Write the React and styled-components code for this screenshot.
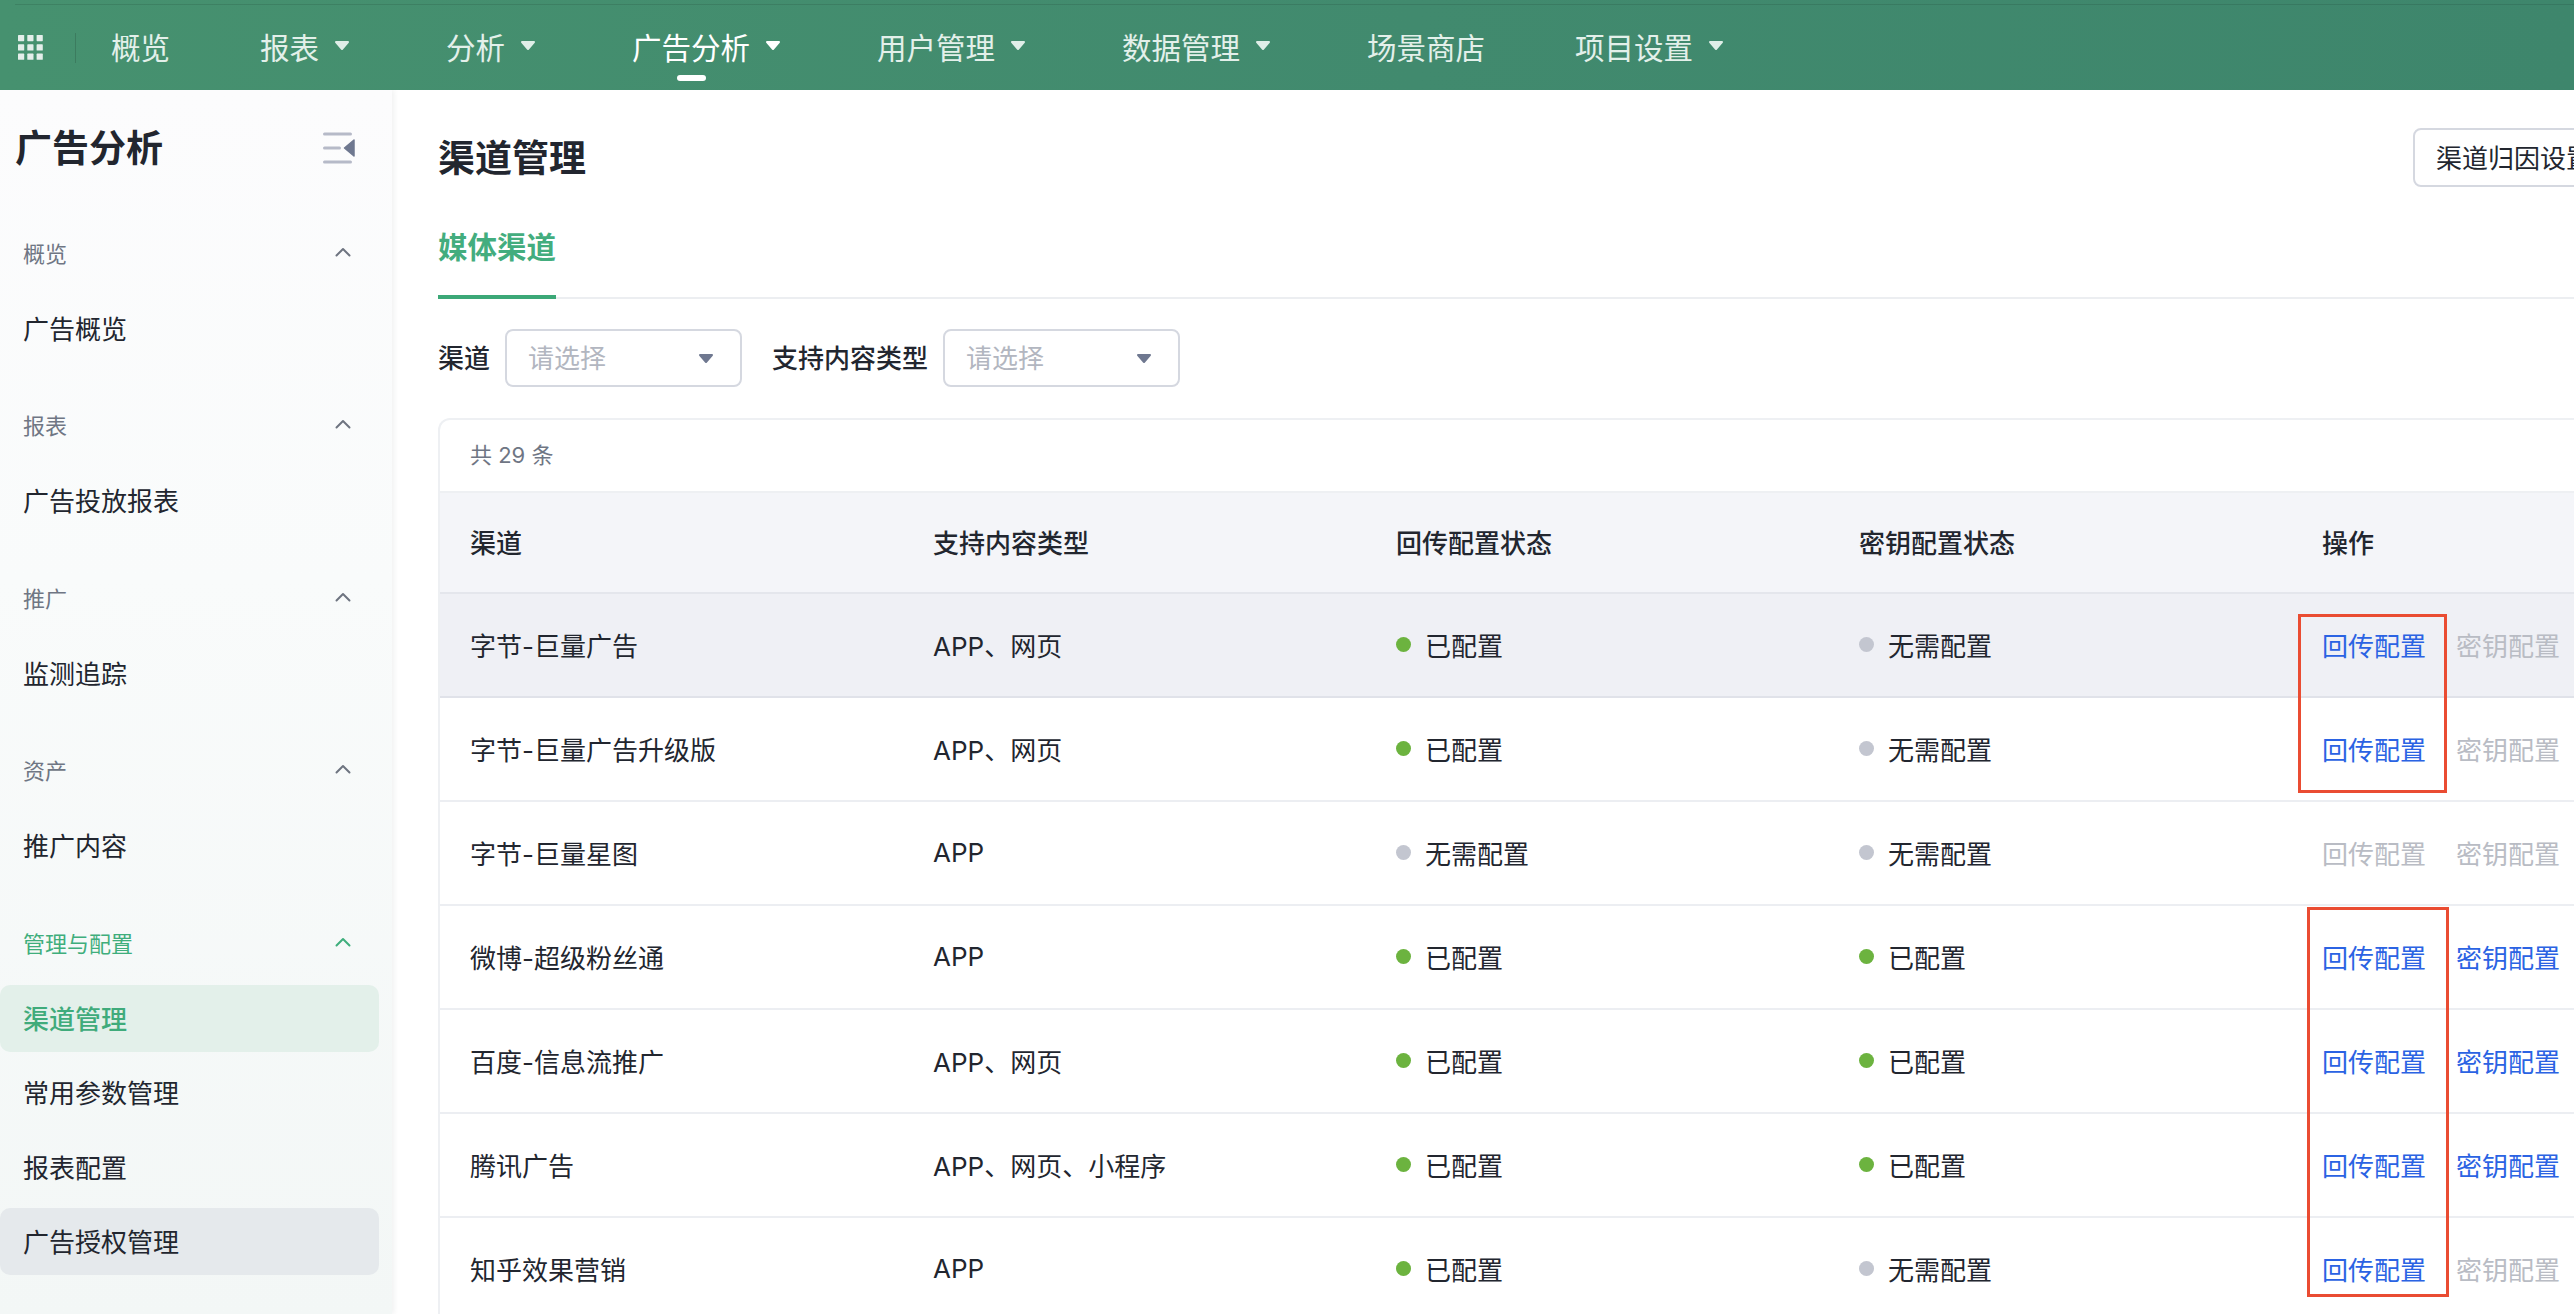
import React from "react";
import styled, { createGlobalStyle } from "styled-components";

const NAV_ITEMS = [
  { label: "概览" },
  { label: "报表", menu: true },
  { label: "分析", menu: true },
  { label: "广告分析", menu: true, active: true },
  { label: "用户管理", menu: true },
  { label: "数据管理", menu: true },
  { label: "场景商店" },
  { label: "项目设置", menu: true },
];

const SIDE_GROUPS = [
  { title: "概览", items: ["广告概览"] },
  { title: "报表", items: ["广告投放报表"] },
  { title: "推广", items: ["监测追踪"] },
  { title: "资产", items: ["推广内容"] },
  { title: "管理与配置", active: true, items: ["渠道管理", "常用参数管理", "报表配置", "广告授权管理"] },
];

const CHANNELS = [
  { name: "字节-巨量广告", types: "APP、网页", back: true, key: false, backLink: true, keyLink: false, hover: true },
  { name: "字节-巨量广告升级版", types: "APP、网页", back: true, key: false, backLink: true, keyLink: false },
  { name: "字节-巨量星图", types: "APP", back: false, key: false, backLink: false, keyLink: false },
  { name: "微博-超级粉丝通", types: "APP", back: true, key: true, backLink: true, keyLink: true },
  { name: "百度-信息流推广", types: "APP、网页", back: true, key: true, backLink: true, keyLink: true },
  { name: "腾讯广告", types: "APP、网页、小程序", back: true, key: true, backLink: true, keyLink: true },
  { name: "知乎效果营销", types: "APP", back: true, key: false, backLink: true, keyLink: false },
];

const Caret = ({ color }) => (
  <svg width="16" height="11" viewBox="0 0 16 11">
    <path d="M2 2h12L8 9z" fill={color} stroke={color} strokeWidth="2" strokeLinejoin="round" />
  </svg>
);

const GridIcon = () => (
  <svg width="26" height="26" viewBox="0 0 26 26" fill="#e4eeea">
    {[0, 9.3, 18.6].map((y) =>
      [0, 9.3, 18.6].map((x) => <rect key={`${x}-${y}`} x={x} y={y} width="6.2" height="6.2" rx="0.6" />)
    )}
  </svg>
);

const CollapseIcon = () => (
  <svg width="32" height="32" viewBox="0 0 32 32">
    <g stroke="#b6bac8" strokeWidth="3" strokeLinecap="round">
      <path d="M1.5 2h26" />
      <path d="M1.5 16h15" />
      <path d="M1.5 30h26" />
    </g>
    <path d="M31 8v16L21.5 16z" fill="#6f7890" stroke="#6f7890" strokeWidth="1.5" strokeLinejoin="round" />
  </svg>
);

const Chevron = ({ color }) => (
  <svg width="16" height="10" viewBox="0 0 16 10" fill="none">
    <path d="M1.5 8.5L8 2l6.5 6.5" stroke={color} strokeWidth="2" strokeLinecap="round" strokeLinejoin="round" />
  </svg>
);

export default function App() {
  return (
    <Page>
      <GlobalStyle />
      <TopBar>
        <GridIcon />
        <TopDivider />
        <NavList>
          {NAV_ITEMS.map((item) => (
            <NavItem key={item.label} $active={item.active}>
              <NavLabel $active={item.active}>{item.label}</NavLabel>
              {item.menu && (
                <NavCaret>
                  <Caret color={item.active ? "#ffffff" : "#dfeee8"} />
                </NavCaret>
              )}
            </NavItem>
          ))}
        </NavList>
      </TopBar>

      <Body>
        <Sidebar>
          <SideTitleRow>
            <SideTitle>广告分析</SideTitle>
            <CollapseIcon />
          </SideTitleRow>
          {SIDE_GROUPS.map((group) => (
            <SideGroup key={group.title}>
              <GroupHead $active={group.active}>
                <span>{group.title}</span>
                <Chevron color={group.active ? "#3fae7c" : "#6e7480"} />
              </GroupHead>
              <SideItems>
                {group.items.map((item) => (
                  <SideItem key={item} $current={item === "渠道管理"} $hover={item === "广告授权管理"}>
                    {item}
                  </SideItem>
                ))}
              </SideItems>
            </SideGroup>
          ))}
        </Sidebar>

        <Main>
          <Content>
            <TitleRow>
              <PageTitle>渠道管理</PageTitle>
              <OutlineButton>渠道归因设置</OutlineButton>
            </TitleRow>

            <Tabs>
              <Tab>媒体渠道</Tab>
            </Tabs>

            <Filters>
              <FilterLabel>渠道</FilterLabel>
              <SelectBox>
                <span>请选择</span>
                <Caret color="#6f7890" />
              </SelectBox>
              <FilterLabel>支持内容类型</FilterLabel>
              <SelectBox>
                <span>请选择</span>
                <Caret color="#6f7890" />
              </SelectBox>
            </Filters>

            <Card>
              <CountRow>共 29 条</CountRow>
              <HeadRow>
                <div>渠道</div>
                <div>支持内容类型</div>
                <div>回传配置状态</div>
                <div>密钥配置状态</div>
                <div>操作</div>
              </HeadRow>
              {CHANNELS.map((row) => (
                <Row key={row.name} $hover={row.hover}>
                  <div>{row.name}</div>
                  <div>{row.types}</div>
                  <Status>
                    <Dot $on={row.back} />
                    {row.back ? "已配置" : "无需配置"}
                  </Status>
                  <Status>
                    <Dot $on={row.key} />
                    {row.key ? "已配置" : "无需配置"}
                  </Status>
                  <Actions>
                    <ActionLink $on={row.backLink}>回传配置</ActionLink>
                    <ActionLink $on={row.keyLink}>密钥配置</ActionLink>
                  </Actions>
                </Row>
              ))}
            </Card>
          </Content>
        </Main>
      </Body>

      <Callout $x={2298} $y={614} $w={149} $h={179} />
      <Callout $x={2307} $y={907} $w={142} $h={390} />
    </Page>
  );
}

const GlobalStyle = createGlobalStyle`
  html, body {
    margin: 0;
    padding: 0;
    background: #ffffff;
    overflow: hidden;
  }
  * {
    box-sizing: border-box;
  }
`;

const Page = styled.div`
  position: relative;
  width: 2574px;
  height: 1314px;
  overflow: hidden;
  font-family: Inter, "Noto Sans CJK SC", sans-serif;
  font-size: 26px;
  color: #22262f;
`;

const TopBar = styled.header`
  position: relative;
  z-index: 2;
  display: flex;
  align-items: center;
  height: 90px;
  padding: 6px 0 0 18px;
  background: linear-gradient(90deg, #46916f 0%, #418a6e 55%, #3e866c 100%);

  &::before {
    content: "";
    position: absolute;
    top: 4px;
    left: 15px;
    right: 0;
    height: 1px;
    background: rgba(0, 0, 0, 0.1);
  }
`;

const TopDivider = styled.span`
  width: 1px;
  height: 30px;
  margin-left: 31px;
  background: rgba(0, 0, 0, 0.14);
`;

const NavList = styled.nav`
  display: flex;
  align-items: center;
  gap: 90px;
  margin-left: 35px;
`;

const NavItem = styled.div`
  display: flex;
  align-items: center;
  color: ${(p) => (p.$active ? "#ffffff" : "#e3f0ea")};
`;

const NavLabel = styled.span`
  position: relative;
  font-size: 29.5px;
  line-height: 40px;

  ${(p) =>
    p.$active &&
    `
    &::after {
      content: "";
      position: absolute;
      left: 50%;
      bottom: -13px;
      width: 29px;
      height: 6px;
      margin-left: -14.5px;
      border-radius: 3px;
      background: #ffffff;
    }
  `}
`;

const NavCaret = styled.span`
  display: flex;
  margin: -6px 6px 0 15px;
`;

const Body = styled.div`
  display: flex;
  height: 1224px;
`;

const Sidebar = styled.aside`
  position: relative;
  z-index: 1;
  flex: 0 0 392px;
  padding-top: 28px;
  background: linear-gradient(180deg, #fcfcfd 0%, #f9fbfb 40%, #f3f7f6 100%);
  box-shadow: 2px 0 5px rgba(40, 50, 60, 0.07);
`;

const SideTitleRow = styled.div`
  display: flex;
  align-items: center;
  justify-content: space-between;
  height: 60px;
  margin-bottom: 50px;
  padding: 0 37px 0 15px;
`;

const SideTitle = styled.h2`
  margin: 2px 0 0;
  font-size: 37px;
  line-height: 60px;
  font-weight: 700;
  color: #22262f;
`;

const SideGroup = styled.section`
  margin-bottom: 38.4px;
`;

const GroupHead = styled.div`
  display: flex;
  align-items: center;
  justify-content: space-between;
  height: 50px;
  margin-bottom: 17px;
  padding: 0 41px 0 23px;
  font-size: 22px;
  color: ${(p) => (p.$active ? "#3fae7c" : "#6f7684")};

  span {
    margin-bottom: 2px;
  }

  svg {
    margin-top: -2px;
  }
`;

const SideItems = styled.div`
  display: flex;
  flex-direction: column;
  gap: 7.5px;
`;

const SideItem = styled.div`
  display: flex;
  align-items: center;
  width: 379px;
  height: 67px;
  padding: 0 0 2px 23px;
  border-radius: 10px;
  color: ${(p) => (p.$current ? "#3fab7b" : "#22262f")};
  font-weight: ${(p) => (p.$current ? 500 : 400)};
  background: ${(p) => (p.$current ? "#e3f0ea" : p.$hover ? "#e5e9ec" : "transparent")};
`;

const Main = styled.main`
  flex: 1;
  min-width: 0;
  overflow: hidden;
  padding: 38px 0 0 46px;
`;

const Content = styled.div`
  width: 2177px;
`;

const TitleRow = styled.div`
  display: flex;
  align-items: center;
  justify-content: space-between;
  height: 59px;
`;

const PageTitle = styled.h1`
  margin: 0 0 3px;
  font-size: 37px;
  font-weight: 700;
  color: #22262f;
`;

const OutlineButton = styled.button`
  width: 202px;
  height: 59px;
  padding: 0 0 3px 21px;
  border: 2px solid #d5d8e0;
  border-radius: 8px;
  background: #ffffff;
  font: inherit;
  color: #22262f;
  text-align: left;
  white-space: nowrap;
`;

const Tabs = styled.div`
  display: flex;
  margin-top: 39px;
  border-bottom: 2px solid #eceef1;
`;

const Tab = styled.div`
  margin-bottom: -2px;
  padding-bottom: 27px;
  border-bottom: 4px solid #3ca877;
  font-size: 29.5px;
  line-height: 42px;
  font-weight: 600;
  color: #43ad7e;
`;

const Filters = styled.div`
  display: flex;
  align-items: center;
  margin-top: 30px;
`;

const FilterLabel = styled.label`
  margin: 0 15px 3px 0;
  font-weight: 500;
  color: #22262f;
`;

const SelectBox = styled.div`
  display: flex;
  align-items: center;
  justify-content: space-between;
  width: 237px;
  height: 58px;
  margin-right: 30px;
  padding: 0 26px 0 21px;
  border: 2px solid #d5d8e0;
  border-radius: 8px;
  color: #b2b6c0;

  span {
    margin-bottom: 3px;
  }
`;

const Card = styled.div`
  margin-top: 31px;
  border: 2px solid #eef0f3;
  border-bottom: none;
  border-radius: 12px 12px 0 0;
  overflow: hidden;
`;

const CountRow = styled.div`
  display: flex;
  align-items: center;
  height: 71px;
  padding: 0 0 5px 30px;
  font-size: 22px;
  color: #6f7684;
`;

const columns = `
  display: grid;
  grid-template-columns: repeat(4, 463px) 1fr;
  align-items: center;
  padding-left: 30px;
`;

const HeadRow = styled.div`
  ${columns}
  height: 103px;
  padding-bottom: 3px;
  border-top: 2px solid #eef0f3;
  border-bottom: 2px solid #e4e6ec;
  background: #f4f5f9;
  font-weight: 500;
`;

const Row = styled.div`
  ${columns}
  height: 104px;
  padding-bottom: 2px;
  border-bottom: 2px solid ${(p) => (p.$hover ? "#e0e2e9" : "#eceef2")};
  background: ${(p) => (p.$hover ? "#eff0f5" : "#ffffff")};
`;

const Status = styled.div`
  display: flex;
  align-items: center;
  gap: 14px;
`;

const Dot = styled.span`
  width: 15px;
  height: 15px;
  margin-top: 1px;
  border-radius: 50%;
  background: ${(p) => (p.$on ? "#6cb33f" : "#c3c6d0")};
`;

const Actions = styled.div`
  display: flex;
  gap: 30px;
  white-space: nowrap;
`;

const ActionLink = styled.a`
  color: ${(p) => (p.$on ? "#2b63e3" : "#b9bcc4")};
`;

const Callout = styled.div`
  position: absolute;
  z-index: 3;
  left: ${(p) => p.$x}px;
  top: ${(p) => p.$y}px;
  width: ${(p) => p.$w}px;
  height: ${(p) => p.$h}px;
  border: 3px solid #ea4c32;
  pointer-events: none;
`;
